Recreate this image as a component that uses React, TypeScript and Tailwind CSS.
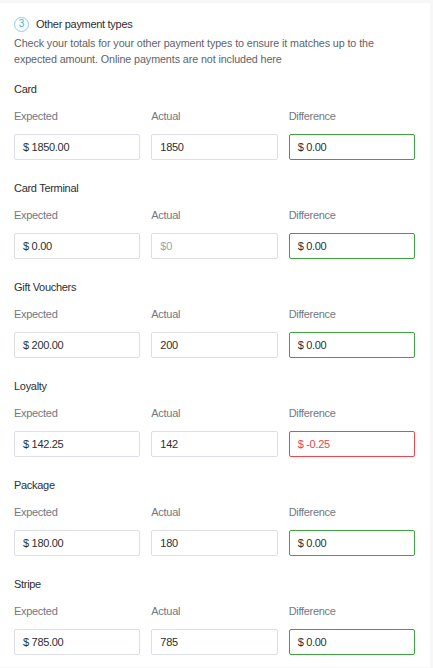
import React from 'react';

type Row = {
  name: string;
  expected: string;
  actual: string;
  diff: string;
  ok: boolean;
};

const rows: Row[] = [
  { name: 'Card', expected: '$ 1850.00', actual: '1850', diff: '$ 0.00', ok: true },
  { name: 'Card Terminal', expected: '$ 0.00', actual: '', diff: '$ 0.00', ok: true },
  { name: 'Gift Vouchers', expected: '$ 200.00', actual: '200', diff: '$ 0.00', ok: true },
  { name: 'Loyalty', expected: '$ 142.25', actual: '142', diff: '$ -0.25', ok: false },
  { name: 'Package', expected: '$ 180.00', actual: '180', diff: '$ 0.00', ok: true },
  { name: 'Stripe', expected: '$ 785.00', actual: '785', diff: '$ 0.00', ok: true },
];

function Field({ label, children }: { label: string; children: React.ReactNode }) {
  return (
    <div className="flex flex-col">
      <span className="text-[11px] leading-4 tracking-[-0.3px] text-[#737882]">{label}</span>
      <div className="mt-[10px]">{children}</div>
    </div>
  );
}

const box = 'flex h-[26px] items-center rounded-[2px] border px-[8px] text-[11px] tracking-[-0.3px]';

export default function App() {
  return (
    <div
      className="min-h-[668px] w-[433px] bg-[#f7f7f7] pt-[3px]"
      style={{ fontFamily: '"Liberation Sans", Arial, sans-serif' }}
    >
      <section className="w-[430px] bg-white pl-[14px] pr-[15px] pt-[13px] pb-[12px]">
        <div className="flex items-center gap-[7px]">
          <span className="flex h-[15px] w-[15px] items-center justify-center rounded-full border border-[#8fcbea] text-[10px] leading-none text-[#4aa8db]">
            3
          </span>
          <h2 className="text-[11px] leading-4 tracking-[-0.3px] text-[#2b2f33]">Other payment types</h2>
        </div>
        <p className="mt-[3px] text-[10.75px] leading-4 tracking-[-0.1px] text-[#5f6368]">
          Check your totals for your other payment types to ensure it matches up to the expected
          amount. Online payments are not included here
        </p>

        <div className="mt-[14px] flex flex-col gap-5">
          {rows.map((r) => (
            <div key={r.name}>
              <h3 className="text-[11px] leading-4 tracking-[-0.3px] text-[#2b2f33]">{r.name}</h3>
              <div className="mt-[11px] grid grid-cols-3 gap-[11px]">
                <Field label="Expected">
                  <div className={box + ' border-[#dcdfe6] text-[#2b2f33]'}>{r.expected}</div>
                </Field>
                <Field label="Actual">
                  <div className={box + ' border-[#dcdfe6] text-[#2b2f33]'}>
                    {r.actual ? r.actual : <span className="text-[#a0a4aa]">$0</span>}
                  </div>
                </Field>
                <Field label="Difference">
                  <div
                    className={
                      r.ok
                        ? box + ' border-[#3fa33f] text-[#2b2f33]'
                        : box + ' border-[#f0454a] text-[#e8474c]'
                    }
                  >
                    {r.diff}
                  </div>
                </Field>
              </div>
            </div>
          ))}
        </div>
      </section>
    </div>
  );
}
